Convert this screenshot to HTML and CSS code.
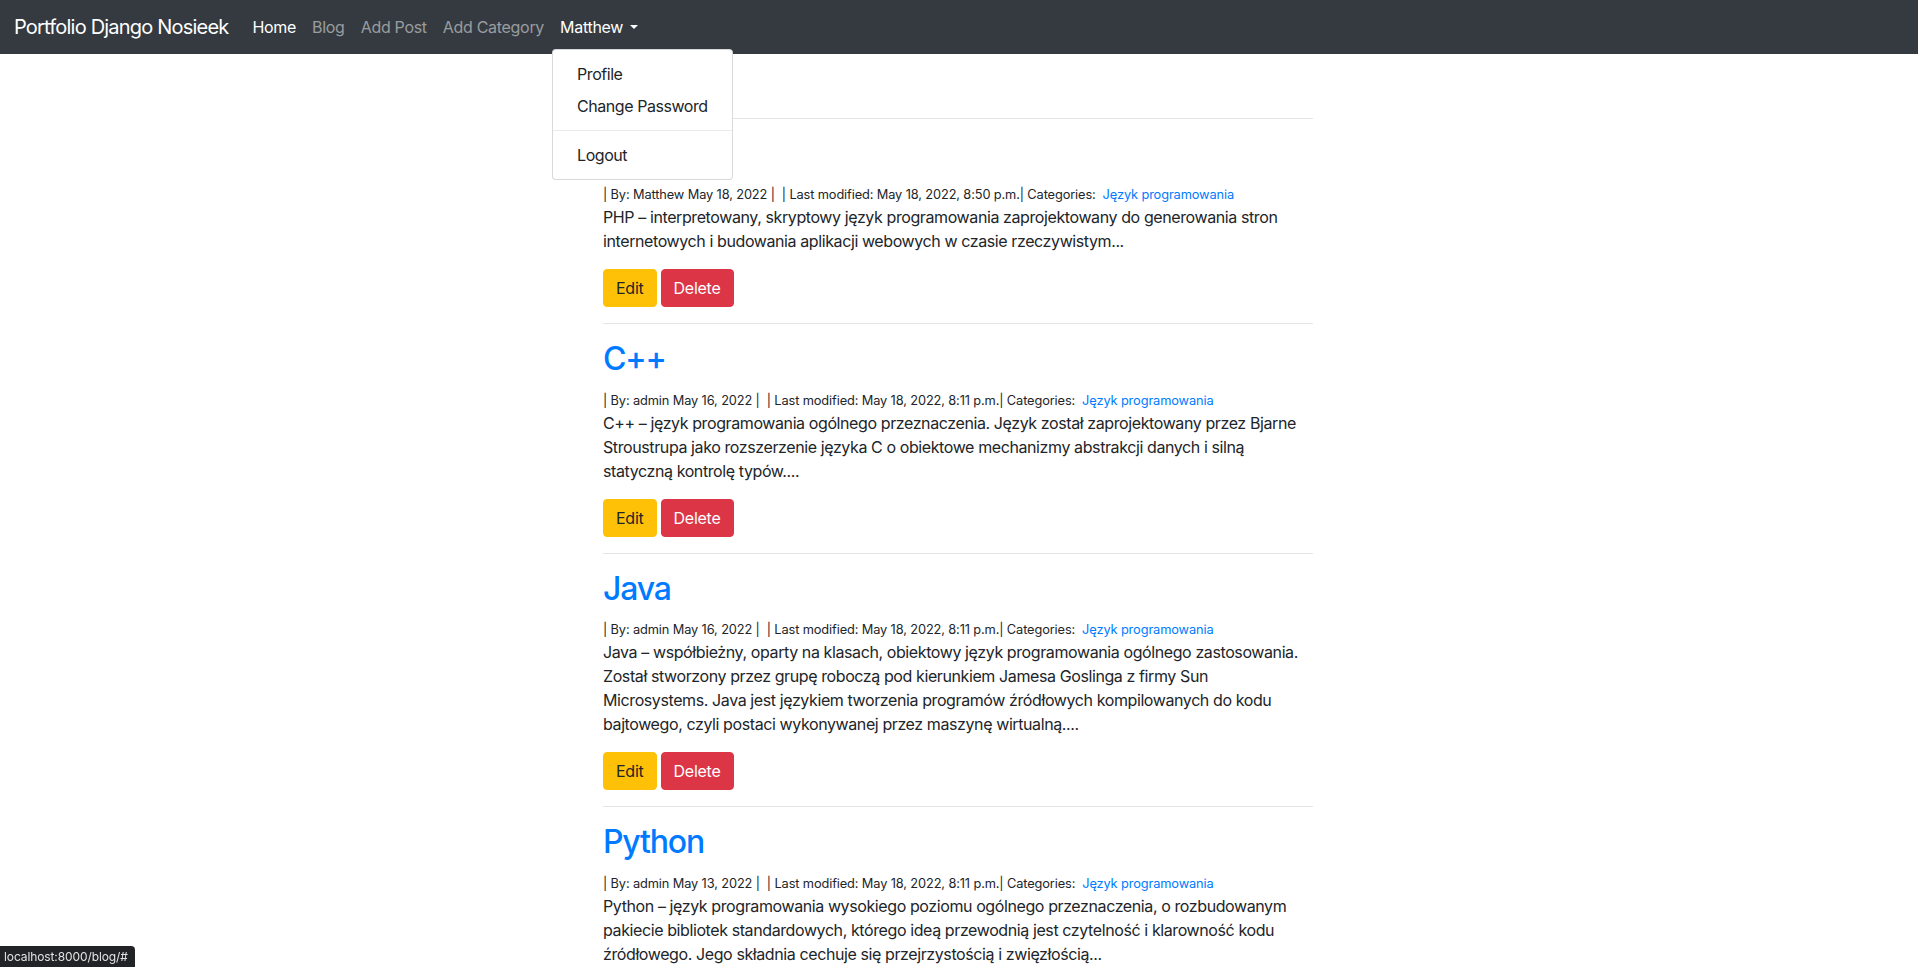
FILE: index.html
```html
<!DOCTYPE html>
<html lang="pl">
<head>
<meta charset="utf-8">
<title>Portfolio Django Nosieek</title>
<link rel="stylesheet" href="styles.css">
</head>
<body>
<nav class="navbar">
  <a class="brand" href="#">Portfolio Django Nosieek</a>
  <ul class="nav">
    <li class="nav-item"><a class="nav-link active" href="#">Home</a></li>
    <li class="nav-item"><a class="nav-link" href="#">Blog</a></li>
    <li class="nav-item"><a class="nav-link" href="#">Add Post</a></li>
    <li class="nav-item"><a class="nav-link" href="#">Add Category</a></li>
    <li class="nav-item dropdown">
      <a class="nav-link active dropdown-toggle" href="#">Matthew</a>
      <div class="dropdown-menu">
        <a class="dropdown-item" href="#">Profile</a>
        <a class="dropdown-item" href="#">Change Password</a>
        <div class="dropdown-divider"></div>
        <a class="dropdown-item" href="#">Logout</a>
      </div>
    </li>
  </ul>
</nav>

<main class="container">
  <hr class="sep">
  <article class="post">
    <h2 class="post-title"><a href="#">PHP</a></h2>
    <div class="meta">| By: Matthew May 18, 2022 | &nbsp;| Last modified: May 18, 2022, 8:50 p.m.| Categories: &nbsp;<a href="#">Język programowania</a></div>
    <p class="excerpt">PHP – interpretowany, skryptowy język programowania zaprojektowany do generowania stron internetowych i budowania aplikacji webowych w czasie rzeczywistym...</p>
    <div class="actions"><a class="btn btn-warning" href="#">Edit</a><a class="btn btn-danger" href="#">Delete</a></div>
  </article>
  <hr class="sep">
  <article class="post">
    <h2 class="post-title"><a href="#">C++</a></h2>
    <div class="meta">| By: admin May 16, 2022 | &nbsp;| Last modified: May 18, 2022, 8:11 p.m.| Categories: &nbsp;<a href="#">Język programowania</a></div>
    <p class="excerpt">C++ – język programowania ogólnego przeznaczenia. Język został zaprojektowany przez Bjarne Stroustrupa jako rozszerzenie języka C o obiektowe mechanizmy abstrakcji danych i silną statyczną kontrolę typów....</p>
    <div class="actions"><a class="btn btn-warning" href="#">Edit</a><a class="btn btn-danger" href="#">Delete</a></div>
  </article>
  <hr class="sep">
  <article class="post">
    <h2 class="post-title"><a href="#">Java</a></h2>
    <div class="meta">| By: admin May 16, 2022 | &nbsp;| Last modified: May 18, 2022, 8:11 p.m.| Categories: &nbsp;<a href="#">Język programowania</a></div>
    <p class="excerpt">Java – współbieżny, oparty na klasach, obiektowy język programowania ogólnego zastosowania. Został stworzony przez grupę roboczą pod kierunkiem Jamesa Goslinga z firmy Sun Microsystems. Java jest językiem tworzenia programów źródłowych kompilowanych do kodu bajtowego, czyli postaci wykonywanej przez maszynę wirtualną....</p>
    <div class="actions"><a class="btn btn-warning" href="#">Edit</a><a class="btn btn-danger" href="#">Delete</a></div>
  </article>
  <hr class="sep">
  <article class="post">
    <h2 class="post-title"><a href="#">Python</a></h2>
    <div class="meta">| By: admin May 13, 2022 | &nbsp;| Last modified: May 18, 2022, 8:11 p.m.| Categories: &nbsp;<a href="#">Język programowania</a></div>
    <p class="excerpt">Python – język programowania wysokiego poziomu ogólnego przeznaczenia, o rozbudowanym pakiecie bibliotek standardowych, którego ideą przewodnią jest czytelność i klarowność kodu źródłowego. Jego składnia cechuje się przejrzystością i zwięzłością...</p>
    <div class="actions"><a class="btn btn-warning" href="#">Edit</a><a class="btn btn-danger" href="#">Delete</a></div>
  </article>
  <hr class="sep">
</main>

<div class="status">localhost:8000/blog/#</div>
</body>
</html>
```

FILE: styles.css
```css
* { box-sizing: border-box; }

html, body {
  margin: 0;
  padding: 0;
}

body {
  font-family: Inter, "Noto Sans", "Liberation Sans", sans-serif;
  font-size: 16px;
  line-height: 1.5;
  color: #212529;
  background: #fff;
}

a { text-decoration: none; }

/* Navbar */
.navbar {
  display: flex;
  align-items: center;
  height: 54px;
  padding: 7px 16px 7px 14px;
  background: #343a40;
  position: relative;
  z-index: 10;
}

.brand {
  color: #fff;
  font-size: 20px;
  line-height: 30px;
  letter-spacing: -0.8px;
  padding: 5px 0;
  margin-right: 16px;
  white-space: nowrap;
}

.nav {
  display: flex;
  list-style: none;
  margin: 0;
  padding: 0;
}

.nav-item { position: relative; }

.nav-link {
  display: block;
  padding: 8px;
  line-height: 24px;
  letter-spacing: -0.3px;
  color: rgba(255, 255, 255, 0.5);
}

.nav-link.active { color: #fff; }

.dropdown-toggle::after {
  content: "";
  display: inline-block;
  margin-left: 0.45em;
  vertical-align: 0.255em;
  border-top: 0.3em solid;
  border-right: 0.3em solid transparent;
  border-left: 0.3em solid transparent;
  border-bottom: 0;
}

.dropdown-menu {
  position: absolute;
  top: 100%;
  left: 0;
  margin-top: 2px;
  min-width: 160px;
  padding: 8px 0;
  background: #fff;
  border: 1px solid rgba(0, 0, 0, 0.15);
  border-radius: 4px;
  z-index: 20;
}

.dropdown-item {
  display: block;
  padding: 4px 24px;
  line-height: 24px;
  letter-spacing: -0.45px;
  color: #212529;
  white-space: nowrap;
}

.dropdown-divider {
  height: 0;
  margin: 8px 0;
  border-top: 1px solid #e9ecef;
}

/* Content */
.container {
  max-width: 712px;
  margin: 0 auto;
  padding: 48px 2px 0 0;
}

.sep {
  margin: 16px 0;
  border: 0;
  border-top: 1px solid rgba(0, 0, 0, 0.1);
}

.post-title {
  margin: 0 0 8px;
  font-size: 32px;
  font-weight: 500;
  line-height: 1.2;
  letter-spacing: -1.2px;
}

.post-title a { color: #007bff; }

.meta {
  font-size: 12.8px;
  line-height: 20px;
  letter-spacing: -0.12px;
  padding-top: 4px;
  white-space: nowrap;
}

.meta a { color: #007bff; }

.excerpt {
  margin: 0 0 16px;
  letter-spacing: -0.4px;
}

.actions {
  display: flex;
  gap: 4px;
}

.btn {
  display: inline-block;
  padding: 6px 12px;
  font-size: 16px;
  line-height: 24px;
  letter-spacing: -0.25px;
  border: 1px solid transparent;
  border-radius: 4px;
}

.btn-warning {
  background: #ffc107;
  border-color: #ffc107;
  color: #212529;
}

.btn-danger {
  background: #dc3545;
  border-color: #dc3545;
  color: #fff;
}

/* Browser status bubble */
.status {
  position: fixed;
  left: 0;
  bottom: 0;
  height: 21px;
  padding: 0 7px 0 4px;
  background: #222326;
  color: #e3e3e3;
  font-size: 12px;
  line-height: 21px;
  letter-spacing: -0.1px;
  border-top-right-radius: 4px;
  box-shadow: 0 0 0 1px rgba(255, 255, 255, 0.6);
  z-index: 30;
}
```
